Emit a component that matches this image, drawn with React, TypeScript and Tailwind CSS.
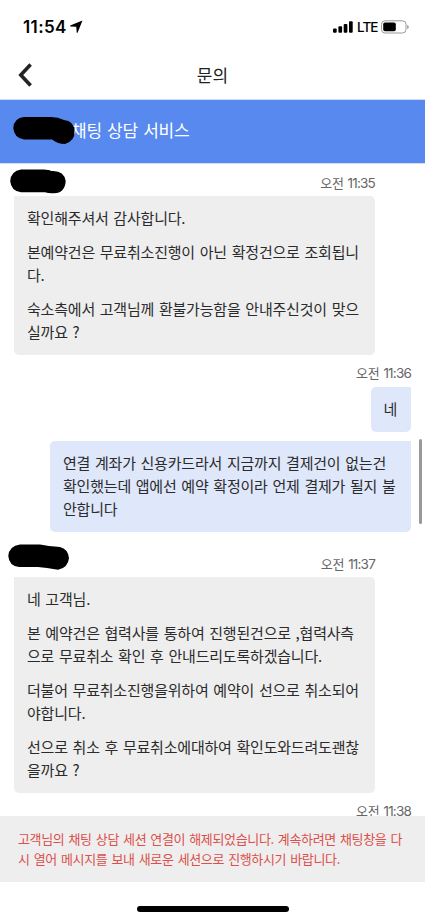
import React from "react";

const firstReply = [
  ["확인해주셔서 감사합니다."],
  ["본예약건은 무료취소진행이 아닌 확정건으로 조회됩니", "다."],
  ["숙소측에서 고객님께 환불가능함을 안내주신것이 맞으", "실까요 ?"],
];

const question = [
  [
    "연결 계좌가 신용카드라서 지금까지 결제건이 없는건",
    "확인했는데 앱에선 예약 확정이라 언제 결제가 될지 불",
    "안합니다",
  ],
];

const secondReply = [
  ["네 고객님."],
  ["본 예약건은 협력사를 통하여 진행된건으로 ,협력사측", "으로 무료취소 확인 후 안내드리도록하겠습니다."],
  ["더불어 무료취소진행을위하여 예약이 선으로 취소되어", "야합니다."],
  ["선으로 취소 후 무료취소에대하여 확인도와드려도괜찮", "을까요 ?"],
];

function Message({ paragraphs }: { paragraphs: string[][] }) {
  return (
    <div className="space-y-[11.4px] whitespace-nowrap text-[15px] leading-[22.8px] tracking-[-0.2px] [word-spacing:1.6px] text-[#2b2b2b]">
      {paragraphs.map((lines, i) => (
        <div key={i}>
          {lines.map((line) => (
            <p key={line}>{line}</p>
          ))}
        </div>
      ))}
    </div>
  );
}

function Time({ value }: { value: string }) {
  return (
    <div className="flex items-center gap-[4px] whitespace-nowrap text-[#666] leading-[18px]">
      <span className="text-[13px] tracking-[-0.3px]">오전</span>
      <span className="font-['Inter'] text-[13.5px] tracking-[-0.8px]">{value}</span>
    </div>
  );
}

function StatusBar() {
  return (
    <div className="flex h-[50px] items-center justify-between pl-[23px] pr-[16px] pt-[3px] text-black">
      <div className="flex items-center gap-[3px]">
        <span className="font-['Inter'] text-[17px] font-semibold leading-5 tracking-[0.4px]">11:54</span>
        <svg width="13" height="13" viewBox="0 0 12 12">
          <path d="M11.5 0.5 L0.2 5 L0.2 5.9 L5.8 6.2 L6.2 11.8 L7 11.8 Z" fill="currentColor" />
        </svg>
      </div>
      <div className="flex items-center">
        <svg width="20" height="12" viewBox="0 0 20 12" fill="currentColor">
          <rect x="0" y="7.6" width="3.7" height="4.2" rx="1" />
          <rect x="5.4" y="5.3" width="3.7" height="6.5" rx="1" />
          <rect x="10.7" y="2.9" width="3.7" height="8.9" rx="1" />
          <rect x="16" y="0.2" width="3.7" height="11.6" rx="1" />
        </svg>
        <span className="ml-[4px] w-[20px] font-['Inter'] text-[13.5px] font-medium leading-5 tracking-[-0.9px]">LTE</span>
        <svg className="ml-[4px]" width="28" height="14" viewBox="0 0 28 14">
          <rect x="0.5" y="0.8" width="24.5" height="12.2" rx="3.5" fill="none" stroke="#9b9b9b" />
          <rect x="2.2" y="2.5" width="12.6" height="8.8" rx="1.8" fill="currentColor" />
          <path d="M26.2 4.8 Q27.8 5.5 27.8 6.9 Q27.8 8.3 26.2 9 Z" fill="#9b9b9b" />
        </svg>
      </div>
    </div>
  );
}

export default function App() {
  return (
    <div className="relative flex h-[921px] w-[425px] flex-col overflow-hidden bg-white font-['Noto_Sans_CJK_KR',sans-serif]">
      <StatusBar />

      <div className="grid h-[49px] grid-cols-[60px_1fr_60px] items-center">
        <svg className="ml-[18px]" width="14" height="24" viewBox="0 0 14 24">
          <path d="M12.6 1.6 L2.8 12 L12.6 22.4" fill="none" stroke="#242424" strokeWidth="3.6" />
        </svg>
        <h1 className="pt-[1px] text-center text-[17px] leading-6 text-[#222]">문의</h1>
      </div>

      <header className="relative flex h-[64.5px] shrink-0 items-center border-y border-[#cfddfa] bg-[#5789ef] pb-[2px] pl-[71px]">
        <span className="whitespace-nowrap text-[17px] leading-6 tracking-[-0.2px] text-white [word-spacing:1.6px]">
          채팅 상담 서비스
        </span>
        <svg className="absolute left-[13px] top-[16px]" width="63" height="30" viewBox="0 0 63 30">
          <path
            d="M11 1 H38 Q45 1 51 4 Q61 5 61.5 15 Q62 25 52 28 Q45 28 39 23.5 H11 Q1 22 0.3 12 Q1 2 11 1 Z"
            fill="black"
          />
        </svg>
      </header>

      <main className="relative h-[652px] shrink-0 overflow-hidden">
        <div className="flex h-[32.5px] items-start justify-between pl-[10px] pr-[50px]">
          <svg className="mt-[5px]" width="56" height="25" viewBox="0 0 56 25">
            <path
              d="M11 0.5 H34 Q39 0.5 41 2 Q54 1 55.7 12 Q55 24 44 24.3 Q38 24.5 35 23.3 H11 Q1 22 0.2 12 Q1 2 11 0.5 Z"
              fill="black"
            />
          </svg>
          <div className="pt-[10px]">
            <Time value="11:35" />
          </div>
        </div>
        <div className="ml-[14px] h-[158.5px] w-[361px] rounded-[5px] rounded-tl-none bg-[#eee] px-[13px] pt-[10.8px]">
          <Message paragraphs={firstReply} />
        </div>

        <div className="flex h-[32px] items-start justify-end pr-[14px] pt-[9.5px]">
          <Time value="11:36" />
        </div>
        <div className="ml-auto mr-[14px] h-[45.5px] w-[40.5px] rounded-[5px] rounded-tr-none bg-[#dfe7fb] px-[13px] pt-[11px]">
          <Message paragraphs={[["네"]]} />
        </div>
        <div className="ml-auto mr-[14px] mt-[9px] h-[90.5px] w-[361px] rounded-[5px] rounded-tr-none bg-[#dfe7fb] px-[13px] pt-[11px]">
          <Message paragraphs={question} />
        </div>

        <div className="flex h-[45.5px] items-start justify-between pl-[8px] pr-[50px]">
          <svg className="mt-[12px]" width="62" height="26" viewBox="0 0 62 26">
            <path
              d="M12 0.5 H32 L41 2 L52 3 Q60 5 61 14 Q60 24 50 25.8 L39 24 L30 23 H11 Q1 22 0.3 12 Q1 2 12 0.5 Z"
              fill="black"
            />
          </svg>
          <div className="pt-[23px]">
            <Time value="11:37" />
          </div>
        </div>
        <div className="ml-[14px] h-[215.5px] w-[361px] rounded-[5px] rounded-tl-none bg-[#eee] px-[13px] pt-[10.8px]">
          <Message paragraphs={secondReply} />
        </div>

        <div className="flex justify-end pr-[14px] pt-[9.5px]">
          <Time value="11:38" />
        </div>

        <div className="absolute right-[3px] top-[275px] h-[85px] w-[3.5px] rounded-full bg-[#999]" />
      </main>

      <div className="h-[66.5px] shrink-0 whitespace-nowrap bg-[#eee] pl-[18px] pt-[13px] text-[13px] leading-[20.5px] tracking-[-0.35px] text-[#dc4f4b] [word-spacing:1.5px]">
        <p>고객님의 채팅 상담 세션 연결이 해제되었습니다. 계속하려면 채팅창을 다</p>
        <p>시 열어 메시지를 보내 새로운 세션으로 진행하시기 바랍니다.</p>
      </div>

      <div className="mx-auto mt-[24px] h-[5.5px] w-[152px] shrink-0 rounded-full bg-black" />
    </div>
  );
}
